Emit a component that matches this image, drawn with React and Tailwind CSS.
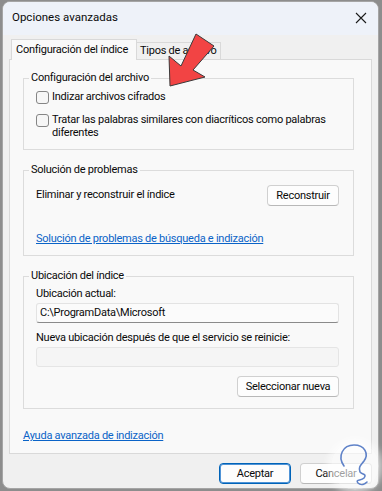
import React from "react";

const font = { fontFamily: 'Roboto, "Noto Sans", sans-serif' };

const Checkbox = () => (
  <span className="mt-[1px] inline-block h-[13px] w-[13px] shrink-0 rounded-[3px] border border-[#858585] bg-[#f6f6f6]"></span>
);

const Button = ({ children, primary, className = "" }) => (
  <button
    className={`flex h-[21px] items-center justify-center rounded-[4px] border bg-[#fdfdfd] leading-none text-[#0a0a0a] ${
      primary
        ? "border-[#0063b8] shadow-[inset_0_0_0_1px_#4f93d6]"
        : "border-[#d0d0d0] border-b-[#b8b8b8]"
    } ${className}`}
  >
    {children}
  </button>
);

const Group = ({ title, children, className = "" }) => (
  <fieldset className={`ml-[13px] mr-[17px] border border-[#dcdcdc] pl-[12px] pr-[14px] ${className}`}>
    <legend className="ml-[-7px] px-[2px] leading-[16px]">{title}</legend>
    {children}
  </fieldset>
);

const Arrow = () => (
  <svg className="pointer-events-none absolute left-0 top-0" width="382" height="491">
    <polygon
      points="170,86 169,56 181,66 196,34 214,46 193,70 205,77"
      fill="#f24444"
      stroke="#3a3a3a"
      strokeWidth="1"
      strokeLinejoin="round"
    />
  </svg>
);

const Logo = () => (
  <div className="pointer-events-none absolute left-[331px] top-[442px] h-[48px] w-[48px] rounded-full bg-white/60 shadow-[0_0_6px_4px_rgba(255,255,255,0.55)]">
    <svg width="48" height="48" viewBox="0 0 48 48">
      <path
        d="M13 24 C 6 14, 12 3, 23 3 C 34 3, 38 12, 33 19 C 30 23, 27 25, 29 30 C 32 33, 36 32, 33 36 C 30 39, 24 37, 27 41 C 30 44, 34 42, 36 40"
        fill="none"
        stroke="#5f82c8"
        strokeWidth="1.6"
        strokeLinecap="round"
      />
    </svg>
  </div>
);

export default function App() {
  return (
    <div
      className="relative h-[491px] w-[382px] overflow-hidden bg-[#8d8d8d] pl-[2px] pt-[1px] text-[11px] tracking-[-0.25px]"
      style={font}
    >
      <div className="flex h-[488px] w-[377px] flex-col overflow-hidden rounded-[8px] border border-[#a5a5a5] bg-[#f0f0f0] text-[#0a0a0a]">
        {/* Title bar */}
        <div className="flex h-[33px] shrink-0 items-center justify-between bg-[#eef2f9] pl-[9px] pr-[8px]">
          <span className="mt-[-2px] text-[11.5px] tracking-normal">Opciones avanzadas</span>
          <svg width="12" height="12" viewBox="0 0 12 12" className="mr-[3px] mt-[-2px]">
            <path d="M1 1 L11 11 M11 1 L1 11" stroke="#1b1b1b" strokeWidth="1.1" />
          </svg>
        </div>

        {/* Tabs */}
        <div className="mt-[4px] flex items-end pl-[8px]">
          <div className="relative z-10 -mb-px h-[21px] w-[126px] border border-b-0 border-[#d9d9d9] bg-[#f9f9f9] pl-[4px] leading-[19px]">
            Configuración del índice
          </div>
          <div className="h-[17px] w-[84px] border border-b-0 border-l-0 border-[#d9d9d9] bg-[#f0f0f0] pl-[3px] leading-[16px]">
            Tipos de archivo
          </div>
        </div>

        {/* Panel */}
        <div className="ml-[6px] mr-[6px] flex h-[395px] flex-col border border-[#d9d9d9] bg-[#f9f9f9] pt-[10px]">
          <Group title="Configuración del archivo" className="pb-[10px]">
            <label className="mt-[4px] flex items-start gap-[3px] leading-[16px]">
              <Checkbox />
              <span className="mt-[-1px]">Indizar archivos cifrados</span>
            </label>
            <label className="mt-[8px] flex items-start gap-[3px] leading-[13px]">
              <Checkbox />
              <span className="whitespace-nowrap">
                Tratar las palabras similares con diacríticos como palabras
                <br />
                diferentes
              </span>
            </label>
          </Group>

          <Group title="Solución de problemas" className="mt-[12px] pb-[8px]">
            <div className="mt-[7px] flex items-center justify-between">
              <span>Eliminar y reconstruir el índice</span>
              <Button className="w-[72px]">Reconstruir</Button>
            </div>
            <a className="mt-[25px] block leading-[16px] text-[#0a63c7] underline">
              Solución de problemas de búsqueda e indización
            </a>
          </Group>

          <Group title="Ubicación del índice" className="mt-[12px] pb-[11px]">
            <div className="mt-[2px] leading-[16px]">Ubicación actual:</div>
            <div className="mt-[1px] flex h-[20px] items-center rounded-[3px] border border-[#e3e3e3] border-b-[#8a8a8a] bg-[#fbfbfb] pl-[3px] pr-[1px]">
              C:\ProgramData\Microsoft
            </div>
            <div className="mt-[7px] leading-[16px]">Nueva ubicación después de que el servicio se reinicie:</div>
            <div className="mt-[1px] h-[20px] rounded-[3px] border border-[#e5e5e5] bg-[#f5f5f5] pr-[1px]"></div>
            <div className="mt-[9px] flex justify-end">
              <Button className="w-[102px]">Seleccionar nueva</Button>
            </div>
          </Group>

          <a className="ml-[13px] mt-[19px] block leading-[16px] text-[#0a63c7] underline">
            Ayuda avanzada de indización
          </a>
        </div>

        {/* Footer buttons */}
        <div className="mt-[9px] flex justify-end gap-[9px] pr-[6px]">
          <Button primary className="w-[72px]">Aceptar</Button>
          <Button className="w-[72px]">Cancelar</Button>
        </div>
      </div>
      <Arrow />
      <Logo />
    </div>
  );
}
